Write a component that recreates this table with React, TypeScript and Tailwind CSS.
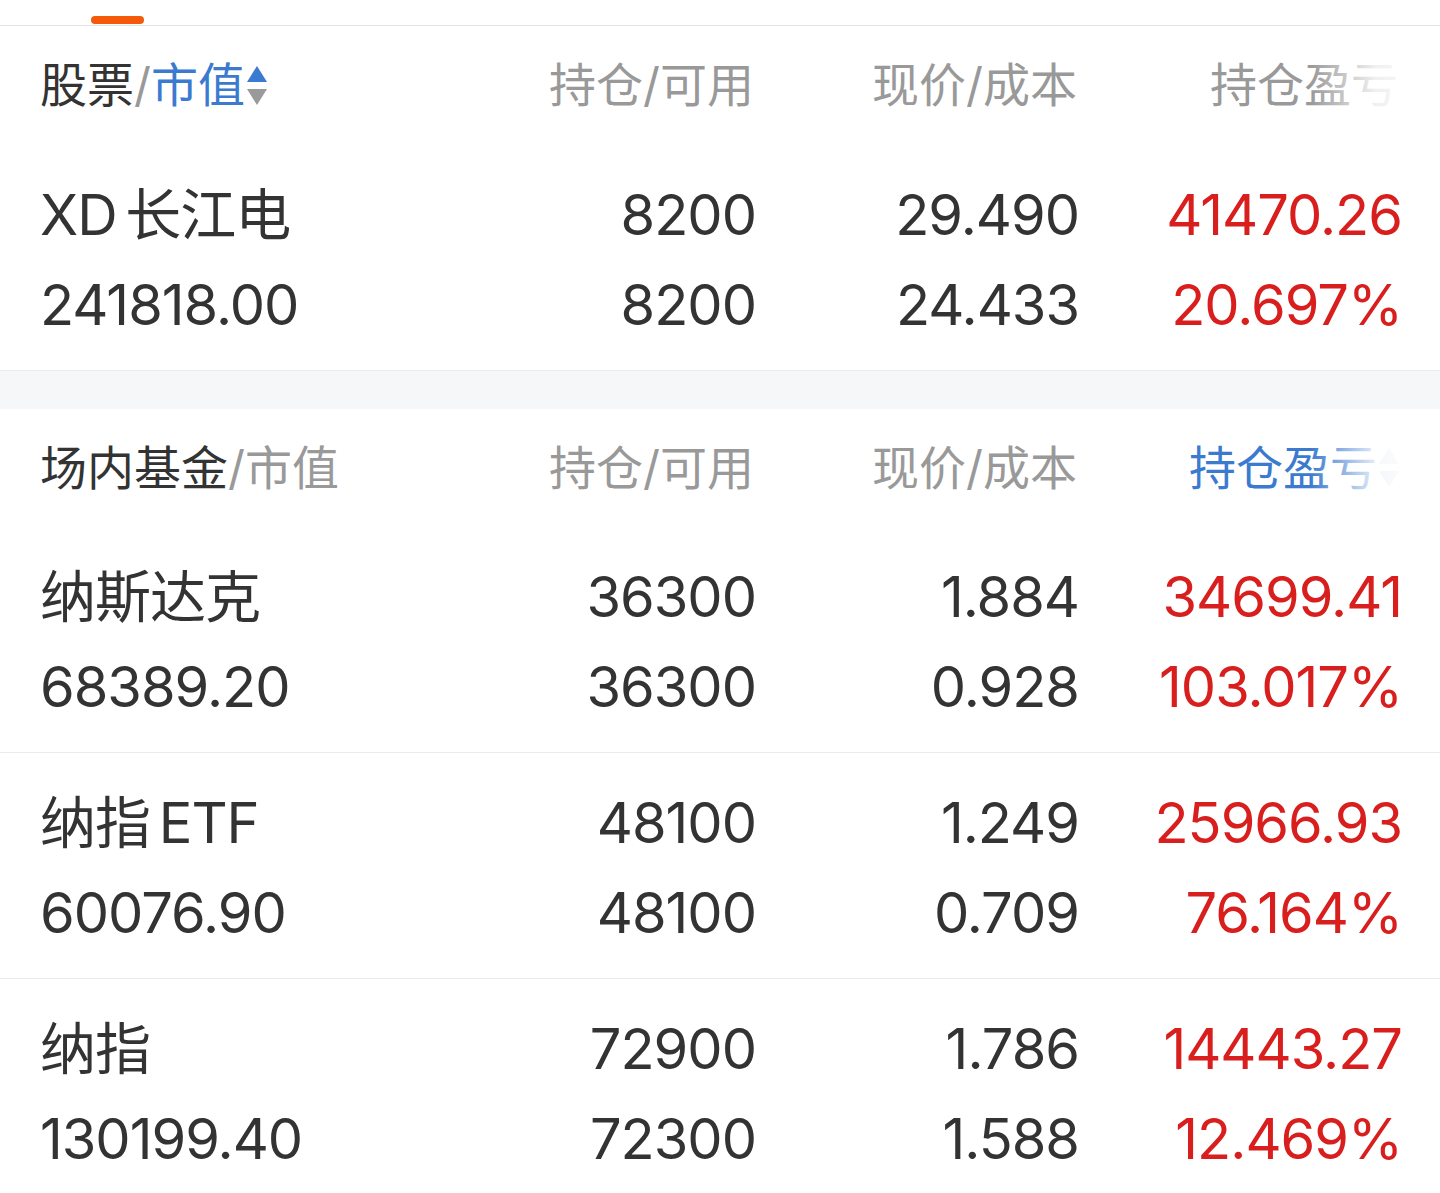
import React from 'react';

type Holding = {
  name: string;
  value: string;
  hold: string;
  avail: string;
  price: string;
  cost: string;
  pnl: string;
  pct: string;
};

const stocks: Holding[] = [
  { name: 'XD 长江电', value: '241818.00', hold: '8200', avail: '8200', price: '29.490', cost: '24.433', pnl: '41470.26', pct: '20.697%' },
];

const funds: Holding[] = [
  { name: '纳斯达克', value: '68389.20', hold: '36300', avail: '36300', price: '1.884', cost: '0.928', pnl: '34699.41', pct: '103.017%' },
  { name: '纳指 ETF', value: '60076.90', hold: '48100', avail: '48100', price: '1.249', cost: '0.709', pnl: '25966.93', pct: '76.164%' },
  { name: '纳指', value: '130199.40', hold: '72900', avail: '72300', price: '1.786', cost: '1.588', pnl: '14443.27', pct: '12.469%' },
];

const font = { fontFamily: 'Inter, "Noto Sans CJK SC", sans-serif' };

function SortIcon({ faded = false }: { faded?: boolean }) {
  // little up / down triangles next to sortable header
  return (
    <svg width="22" height="46" viewBox="0 0 22 46" className="ml-[1px]">
      <path d="M11 3 L21 19 L1 19 Z" fill={faded ? '#c9d3e0' : '#3b7bcf'} />
      <path d="M1 26 L21 26 L11 42 Z" fill={faded ? '#b9cbe6' : '#9a9a9a'} />
    </svg>
  );
}

function Row({ item, last }: { item: Holding; last?: boolean }) {
  return (
    <div className={`grid grid-cols-[430px_286px_323px_323px] pl-[40px] pr-[38px] pt-[25px] pb-[20px] text-[56px] font-[380] leading-[90px] tracking-[-1px] ${last ? '' : 'border-b border-[#ebebeb]'}`}>
      <div className="text-[#333]">
        <div className="whitespace-nowrap [word-spacing:-6px]">{item.name}</div>
        <div>{item.value}</div>
      </div>
      <div className="text-right text-[#333]">
        <div>{item.hold}</div>
        <div>{item.avail}</div>
      </div>
      <div className="text-right text-[#333]">
        <div>{item.price}</div>
        <div>{item.cost}</div>
      </div>
      <div className="text-right text-[#d91e1e]">
        <div>{item.pnl}</div>
        <div>{item.pct}</div>
      </div>
    </div>
  );
}

export default function App() {
  return (
    <div className="w-[1440px] min-h-[1193px] bg-white overflow-hidden" style={font}>
      {/* tab indicator */}
      <div className="h-[26px] flex items-end pl-[91px] border-b border-[#e3e3e3]">
        <div className="w-[53px] h-[8px] rounded-full bg-[#f55a0a] mb-[1px]" />
      </div>

      {/* stocks header */}
      <div className="relative grid grid-cols-[430px_284px_323px_323px] px-[40px] h-[119px] items-center text-[47px] text-[#999]">
        <div className="flex items-center">
          <span className="text-[#333]">股票</span>
          <span>/</span>
          <span className="text-[#3b7bcf]">市值</span>
          <SortIcon />
        </div>
        <div className="text-right">持仓/可用</div>
        <div className="text-right">现价/成本</div>
        <div className="text-right pr-[2px]">持仓盈亏</div>
        <div className="absolute right-0 top-0 h-full w-[130px] bg-gradient-to-r from-white/0 via-white/85 to-white" />
      </div>

      <div className="border-b border-[#ebebeb]">
        {stocks.map((s) => (
          <Row key={s.name} item={s} last />
        ))}
      </div>

      <div className="h-[38px] bg-[#f6f7f9]" />

      {/* funds header */}
      <div className="relative grid grid-cols-[430px_284px_323px_323px] px-[40px] h-[118px] items-center text-[47px] text-[#999]">
        <div className="flex items-center">
          <span className="text-[#333]">场内基金</span>
          <span>/市值</span>
        </div>
        <div className="text-right">持仓/可用</div>
        <div className="text-right">现价/成本</div>
        <div className="flex items-center justify-end text-[#3b7bcf]">
          <span>持仓盈亏</span>
          <SortIcon faded />
        </div>
        <div className="absolute right-0 top-0 h-full w-[130px] bg-gradient-to-r from-white/0 via-white/85 to-white" />
      </div>

      {funds.map((f, i) => (
        <Row key={f.name} item={f} last={i === funds.length - 1} />
      ))}
    </div>
  );
}
